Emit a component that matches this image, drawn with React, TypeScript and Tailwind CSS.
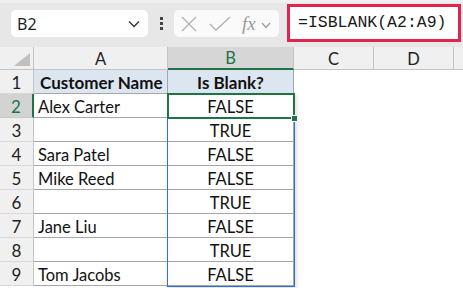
import React from 'react';

const rows: { name: string; value: string }[] = [
    { name: 'Alex Carter', value: 'FALSE' },
    { name: '', value: 'TRUE' },
    { name: 'Sara Patel', value: 'FALSE' },
    { name: 'Mike Reed', value: 'FALSE' },
    { name: '', value: 'TRUE' },
    { name: 'Jane Liu', value: 'FALSE' },
    { name: '', value: 'TRUE' },
    { name: 'Tom Jacobs', value: 'FALSE' },
];

const Toolbar: React.FC = () => (
    <div className="h-[47px] bg-[#e7e7e7] flex items-start relative">
        <div className="absolute top-0 left-0 right-0 h-[3px] bg-[#efefef]" />
        {/* Name box */}
        <div className="mt-[10px] ml-[11px] w-[137px] h-[27px] bg-white rounded-[5px] flex items-center justify-between pl-[6px] pr-[8px]">
            <span className="text-[16px] text-[#1f1f1f]" style={{ fontFamily: '"Noto Sans", sans-serif' }}>B2</span>
            <svg width="12" height="8" viewBox="0 0 12 8" fill="none">
                <path d="M1 1.5 L6 6.5 L11 1.5" stroke="#333" strokeWidth="1.3" />
            </svg>
        </div>
        {/* dots */}
        <div className="mt-[17px] ml-[12px] flex flex-col gap-[2px]">
            <div className="w-[3px] h-[3px] bg-[#444]" />
            <div className="w-[3px] h-[3px] bg-[#444]" />
            <div className="w-[3px] h-[3px] bg-[#444]" />
        </div>
        {/* cancel / enter / fx */}
        <div className="mt-[10px] ml-[11px] w-[105px] h-[27px] bg-[#fafafa] rounded-[5px] flex items-center pl-[7px]">
            <svg width="16" height="16" viewBox="0 0 16 16" fill="none">
                <path d="M1 1 L15 15 M15 1 L1 15" stroke="#b0b0b0" strokeWidth="1.3" />
            </svg>
            <svg width="22" height="16" viewBox="0 0 22 16" fill="none" className="ml-[12px]">
                <path d="M1 8 L7 14 L21 1" stroke="#b0b0b0" strokeWidth="1.3" />
            </svg>
            <span className="ml-[11px] text-[19px] italic text-[#9a9a9a] leading-none" style={{ fontFamily: '"Liberation Serif", serif' }}>fx</span>
            <svg width="10" height="7" viewBox="0 0 10 7" fill="none" className="ml-[5px] mt-[3px]">
                <path d="M1 1 L5 5.5 L9 1" stroke="#999" strokeWidth="1.2" />
            </svg>
        </div>
        {/* formula input */}
        <div className="mt-[4px] ml-[8px] w-[174px] h-[38px] bg-white border-[3px] border-[#e2234f] flex items-center pl-[8px]">
            <span className="text-[16.5px] text-[#1a1a1a]" style={{ fontFamily: '"Liberation Mono", monospace' }}>=ISBLANK(A2:A9)</span>
        </div>
    </div>
);

const App: React.FC = () => {
    const font = { fontFamily: 'Lato, "Noto Sans", sans-serif' };
    return (
        <div className="w-[463px] h-[288px] bg-white overflow-hidden">
            <Toolbar />
            <div className="relative" style={font}>
                {/* column headers */}
                <div className="flex h-[23px] bg-[#f0f0f0] text-[16.5px] text-[#222]">
                    <div className="w-[34px] border-r border-b border-[#c4c4c4] relative">
                        <svg className="absolute right-[3px] bottom-[3px]" width="16" height="13" viewBox="0 0 16 13">
                            <path d="M16 0 L16 13 L0 13 Z" fill="#c0c0c0" />
                        </svg>
                    </div>
                    <div className="w-[134px] border-r border-b border-[#c4c4c4] flex items-center justify-center pt-[2px]">A</div>
                    <div className="w-[126px] border-r border-b-2 border-r-[#c4c4c4] border-b-[#217346] bg-[#d6d6d6] text-[#217346] flex items-center justify-center pt-[2px]">B</div>
                    <div className="w-[80px] border-r border-b border-[#c4c4c4] flex items-center justify-center pt-[2px]">C</div>
                    <div className="w-[80px] border-r border-b border-[#c4c4c4] flex items-center justify-center pt-[2px]">D</div>
                    <div className="flex-1 border-b border-[#c4c4c4]" />
                </div>
                {/* header row 1 */}
                <div className="flex h-[24px] text-[16.5px] text-[#111]">
                    <div className="w-[34px] bg-[#f0f0f0] border-r border-b border-r-[#c4c4c4] border-b-[#d8d8d8] flex items-center justify-center text-[#222] text-[17px] pt-[3px]">1</div>
                    <div className="w-[134px] bg-[#dce6f1] border-r border-b border-[#a6a6a6] flex items-center pl-[6px] font-bold text-[17px] pt-[3px]">Customer Name</div>
                    <div className="w-[126px] bg-[#dce6f1] border-r border-b border-[#a6a6a6] flex items-center justify-center font-bold text-[17px] pt-[3px]">Is Blank?</div>
                    <div className="flex-1" />
                </div>
                {rows.map((r, i) => {
                    const selected = i === 0;
                    return (
                        <div key={i} className="flex h-[24px] text-[16.5px] text-[#111]">
                            <div className={selected
                                ? 'w-[34px] bg-[#d3d3d3] border-r-2 border-b border-r-[#217346] border-b-[#c8c8c8] flex items-center justify-center text-[#217346] text-[17px] pt-[3px]'
                                : 'w-[34px] bg-[#f0f0f0] border-r border-b border-r-[#c4c4c4] border-b-[#d8d8d8] flex items-center justify-center text-[#222] text-[17px] pt-[3px]'}>
                                {i + 2}
                            </div>
                            <div className="w-[134px] border-r border-b border-[#a6a6a6] flex items-center pl-[4px] pt-[3px]">{r.name}</div>
                            <div className="w-[126px] border-r border-b border-[#a6a6a6] flex items-center justify-center pt-[3px]">{r.value}</div>
                            <div className="flex-1" />
                        </div>
                    );
                })}
                {/* range highlight B2:B9 */}
                <div className="absolute left-[167px] top-[46px] w-[128px] h-[194px] border border-[#2d6fd2] shadow-[2px_2px_4px_rgba(0,0,0,0.12)] pointer-events-none" />
                {/* active cell B2 */}
                <div className="absolute left-[167px] top-[46px] w-[128px] h-[26px] border-2 border-[#217346] pointer-events-none" />
                <div className="absolute left-[291px] top-[68px] w-[7px] h-[7px] bg-[#217346] border border-white pointer-events-none" />
            </div>
        </div>
    );
};

export default App;
